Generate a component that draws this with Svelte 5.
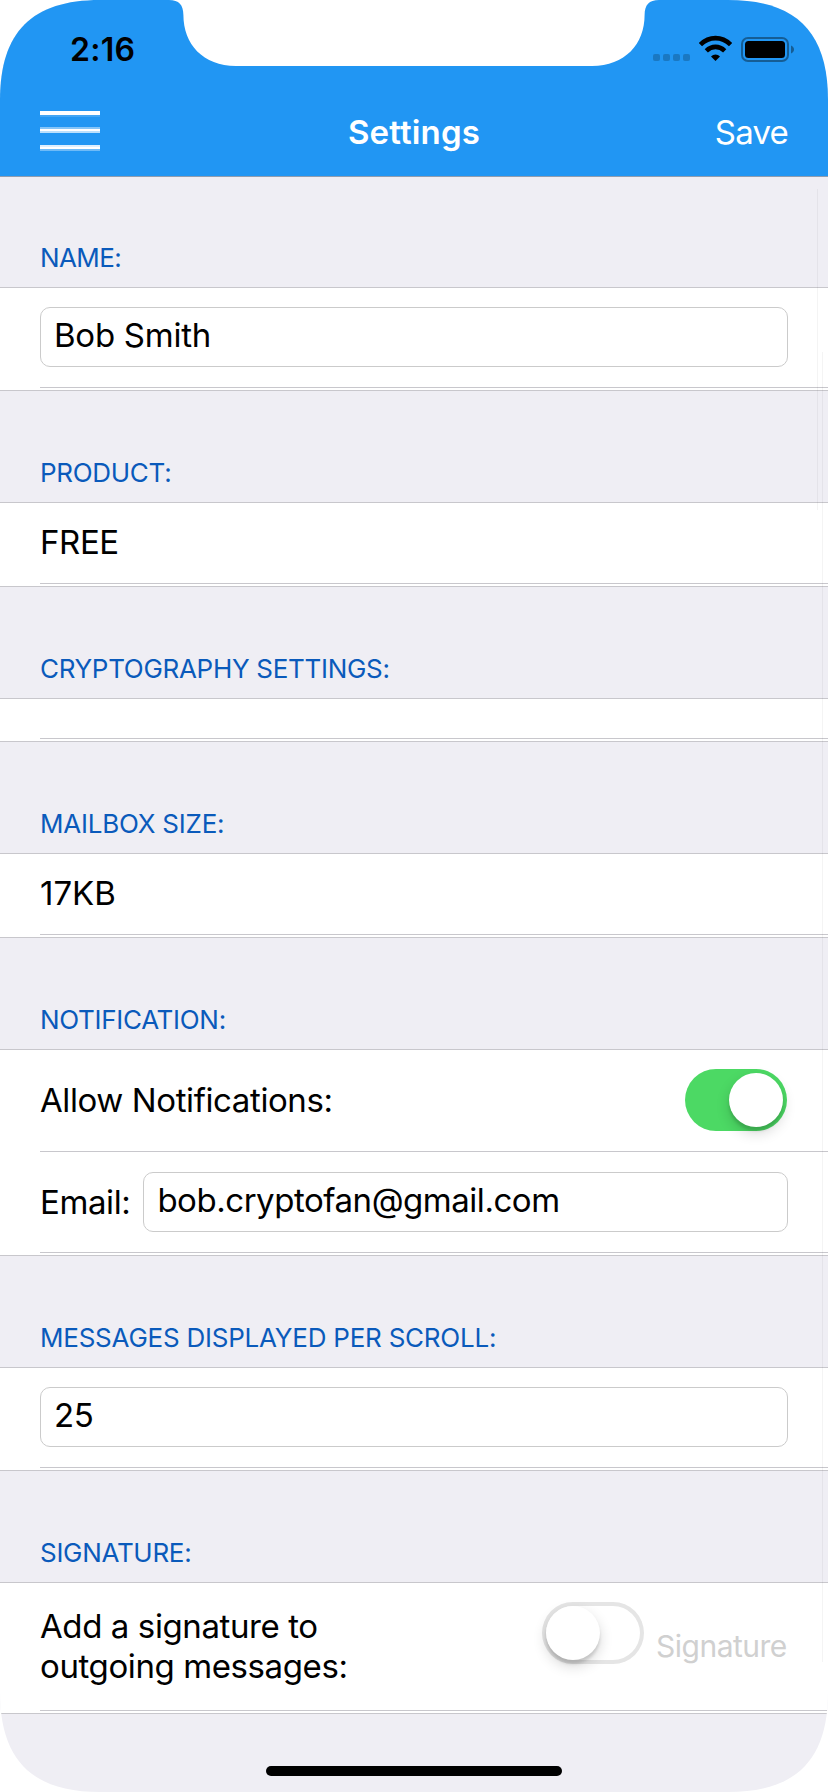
<script>
  let name = $state('Bob Smith');
  let email = $state('bob.cryptofan@gmail.com');
  let perScroll = $state('25');
  let notify = $state(true);
  let sign = $state(false);
</script>

{#snippet toggle(on, label, flip)}
  <button class="switch" class:on role="switch" aria-checked={on} aria-label={label} onclick={flip}>
    <span class="knob"></span>
  </button>
{/snippet}

<div class="screen">
  <header>
    <div class="status">
      <span class="time">2:16</span>
      <svg class="indicators" width="144" height="28" viewBox="0 0 144 28">
        <g fill="#1a78c2">
          <rect x="3" y="19" width="7" height="7" rx="2" />
          <rect x="13" y="19" width="7" height="7" rx="2" />
          <rect x="23" y="19" width="7" height="7" rx="2" />
          <rect x="33" y="19" width="7" height="7" rx="2" />
        </g>
        <g fill="none" stroke="#000" stroke-width="4.6">
          <path d="M50.4 9.6C59.2 .9 71.800 .9 80.600 9.600" />
          <path d="M56.300 15.800C61.700 10.600 69.300 10.600 74.700 15.800" />
        </g>
        <path d="M65.500 26L61 21.500C63.500 18.800 67.500 18.800 70 21.500Z" />
        <rect x="92" y="3" width="46" height="23" rx="6" fill="none" stroke="#155d95" stroke-width="2" />
        <rect x="95" y="6" width="40" height="17" rx="3.500" />
        <path d="M141 10.500C145 12 145 17 141 18.500Z" fill="#155d95" />
      </svg>
    </div>
    <nav>
      <button class="menu" aria-label="Menu">
        <svg width="60" height="40" viewBox="0 0 60 40" fill="#fff" shape-rendering="crispEdges">
          <rect width="60" height="4" /><rect y="4" width="60" height="2" opacity=".15" />
          <rect y="16" width="60" height="2" opacity=".45" /><rect y="18" width="60" height="2" /><rect y="20" width="60" height="2" opacity=".7" />
          <rect y="34" width="60" height="2" opacity=".85" /><rect y="36" width="60" height="2" /><rect y="38" width="60" height="2" opacity=".35" />
        </svg>
      </button>
      <h1>Settings</h1>
      <button class="save">Save</button>
    </nav>
    <svg class="notch" width="490" height="67" viewBox="0 0 490 67" fill="#fff">
      <path d="M0 0C10 0 14.400 5 14.400 15C14.400 44 34 66 67 66H423C456 66 475.600 44 475.600 15C475.600 5 480 0 490 0Z" />
    </svg>
  </header>

  <main>
    <section>
      <h2 class="first">NAME:</h2>
      <div class="group">
        <div class="row field"><input class="name" bind:value={name} /></div>
      </div>
    </section>
    <section>
      <h2>PRODUCT:</h2>
      <div class="group"><div class="row plain">FREE</div></div>
    </section>
    <section>
      <h2>CRYPTOGRAPHY SETTINGS:</h2>
      <div class="group"><div class="row empty"></div></div>
    </section>
    <section>
      <h2 class="wide">MAILBOX SIZE:</h2>
      <div class="group"><div class="row plain size">17KB</div></div>
    </section>
    <section>
      <h2>NOTIFICATION:</h2>
      <div class="group">
        <div class="row allow">
          <span>Allow Notifications:</span>
          {@render toggle(notify, 'Allow Notifications', () => (notify = !notify))}
        </div>
        <div class="row email">
          <span>Email:</span>
          <input class="address" bind:value={email} />
        </div>
      </div>
    </section>
    <section>
      <h2 class="wide">MESSAGES DISPLAYED PER SCROLL:</h2>
      <div class="group">
        <div class="row field"><input bind:value={perScroll} /></div>
      </div>
    </section>
    <section>
      <h2>SIGNATURE:</h2>
      <div class="group">
        <div class="row signature">
          <span class="label">Add a signature to<br />outgoing messages:</span>
          {@render toggle(sign, 'Add a signature', () => (sign = !sign))}
          <span class="hint">Signature</span>
        </div>
      </div>
    </section>
  </main>

  <i class="scroll a"></i>
  <i class="scroll b"></i>
  <i class="home"></i>
</div>

<style>
  :global(body) {
    background: #fff;
  }
  .screen {
    position: relative;
    width: 828px;
    height: 1792px;
    overflow: hidden;
    background: #efeef4;
    color: #000;
    font: 33px/40px Inter, sans-serif;
    letter-spacing: -0.4px;
    clip-path: path('M0 100C0 32 32 0 100 0H728C796 0 828 32 828 100V1692C828 1760 796 1792 728 1792H100C32 1792 0 1760 0 1692Z');
  }
  .screen * {
    box-sizing: border-box;
  }
  button {
    border: 0;
    padding: 0;
    background: none;
    font: inherit;
    letter-spacing: inherit;
    color: inherit;
  }
  header {
    position: relative;
    height: 177px;
    background: #2196f3;
    border-bottom: 1px solid #8f9db0;
  }
  .notch {
    position: absolute;
    left: 169px;
    top: 0;
  }
  .status {
    height: 88px;
    padding: 29px 34px 0 70px;
    display: flex;
    justify-content: space-between;
    align-items: flex-start;
  }
  .time {
    margin-top: 1px;
    font-size: 32px;
    font-weight: 600;
    letter-spacing: 0.3px;
  }
  .indicators {
    margin-top: 6px;
  }
  nav {
    height: 88px;
    padding: 0 40px;
    display: grid;
    grid-template-columns: 1fr auto 1fr;
    align-items: center;
    color: #fff;
  }
  .menu {
    justify-self: start;
    height: 40px;
    line-height: 0;
    margin-bottom: 2px;
  }
  h1 {
    margin: 0;
    font-size: 33px;
    font-weight: 600;
    line-height: 40px;
    letter-spacing: 0.15px;
  }
  .save {
    justify-self: end;
    letter-spacing: -0.8px;
  }
  h2 {
    margin: 0;
    height: 111px;
    padding: 67px 40px 0;
    font-size: 26px;
    font-weight: 400;
    line-height: 30px;
    letter-spacing: -0.3px;
    color: #0a5abb;
  }
  h2.wide {
    letter-spacing: -0.23px;
  }
  h2.first {
    height: 110px;
    padding-top: 66px;
    letter-spacing: -0.6px;
  }
  .group {
    border: solid #c8c7cc;
    border-width: 1px 0;
    padding: 0 0 2px 40px;
    background: #fff;
  }
  .row {
    display: flex;
    padding-right: 40px;
    border-bottom: 1px solid #c8c7cc;
    white-space: nowrap;
  }
  .field {
    height: 100px;
    padding-top: 19px;
  }
  input {
    flex: 1;
    min-width: 0;
    height: 60px;
    padding: 0 13px 4px;
    border: 1px solid #cbcbcb;
    border-radius: 10px;
    background: #fff;
    color: #000;
    font: inherit;
    letter-spacing: inherit;
    outline: 0;
  }
  .name {
    letter-spacing: -0.25px;
  }
  .address {
    letter-spacing: -0.46px;
  }
  .plain {
    height: 81px;
    line-height: 78px;
  }
  .size {
    letter-spacing: 0;
  }
  .empty {
    height: 40px;
  }
  .allow {
    height: 102px;
    padding: 0 41px 1px 0;
    justify-content: space-between;
    align-items: center;
  }
  .email {
    height: 101px;
    gap: 13px;
    align-items: center;
  }
  .signature {
    height: 128px;
    padding-top: 19px;
    align-items: flex-start;
  }
  .label {
    width: 502px;
    padding-top: 4px;
  }
  .hint {
    margin: 24px 0 0 12px;
    font-size: 30px;
    letter-spacing: -0.5px;
    color: #d0d0d0;
  }
  .switch {
    flex: none;
    width: 102px;
    height: 62px;
    padding: 4px;
    border-radius: 31px;
    box-shadow: inset 0 0 0 4px #e5e5e5;
    display: flex;
  }
  .switch.on {
    justify-content: flex-end;
    background: #4cd964;
    box-shadow: none;
  }
  .knob {
    width: 54px;
    height: 54px;
    border-radius: 50%;
    background: #fff;
    box-shadow: 0 6px 14px rgba(0, 0, 0, 0.16), 0 4px 3px rgba(0, 0, 0, 0.12);
  }
  .scroll {
    position: absolute;
    width: 1px;
    background: rgba(0, 0, 0, 0.045);
  }
  .a {
    left: 817px;
    top: 189px;
    height: 321px;
  }
  .b {
    left: 822px;
    top: 352px;
    height: 1310px;
  }
  .home {
    position: absolute;
    left: 266px;
    top: 1766px;
    width: 296px;
    height: 10px;
    border-radius: 5px;
    background: #000;
  }
</style>
